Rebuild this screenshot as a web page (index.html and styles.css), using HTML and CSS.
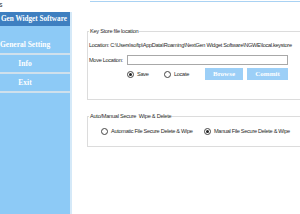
FILE: index.html
```html
<!DOCTYPE html>
<html>
<head>
<meta charset="utf-8">
<link rel="stylesheet" href="styles.css">
</head>
<body>
<div class="window">
  <div class="titlebar"><span class="title">s</span><span class="topline"></span></div>
  <div class="main">
    <nav class="sidebar">
      <div class="brand">Gen Widget Software</div>
      <div class="nav">
        <div class="nav-item">General Setting</div>
        <div class="nav-item">Info</div>
        <div class="nav-item">Exit</div>
      </div>
    </nav>
    <section class="content">
      <fieldset class="group group-key">
        <legend>Key Store file location</legend>
        <div class="row row-loc">Location: C:\Users\softp\AppData\Roaming\NextGen Widget Software\NGWE\local.keystore</div>
        <div class="row row-move">
          <span class="move-label">Move Location:</span>
          <span class="input"></span>
        </div>
        <div class="row row-actions">
          <span class="radio-opt opt-save"><span class="radio checked"></span><span class="rlabel">Save</span></span>
          <span class="radio-opt opt-locate"><span class="radio"></span><span class="rlabel">Locate</span></span>
          <span class="btn btn-browse">Browse</span>
          <span class="btn btn-commit">Commit</span>
        </div>
      </fieldset>
      <fieldset class="group group-wipe">
        <legend>Auto/Manual Secure&nbsp; Wipe &amp; Delete</legend>
        <div class="row row-wipe">
          <span class="radio-opt opt-auto"><span class="radio"></span><span class="rlabel">Automatic File Secure Delete &amp; Wipe</span></span>
          <span class="radio-opt opt-manual"><span class="radio checked"></span><span class="rlabel">Manual File Secure Delete &amp; Wipe</span></span>
        </div>
      </fieldset>
    </section>
  </div>
</div>
</body>
</html>
```

FILE: styles.css
```css
html, body {
  margin: 0;
  padding: 0;
  background: #ffffff;
}
body {
  width: 300px;
  height: 214px;
  overflow: hidden;
  font-family: "Liberation Sans", Arial, sans-serif;
  color: #222;
}
.window {
  width: 300px;
  height: 214px;
  display: flex;
  flex-direction: column;
}
.titlebar {
  height: 12px;
  display: flex;
  align-items: flex-start;
  position: relative;
}
.title {
  font-size: 7px;
  line-height: 9px;
  margin-left: -1px;
  color: #333;
}
.topline {
  position: absolute;
  left: 90px;
  right: 0;
  top: 1px;
  height: 1px;
  background: #a9d2f3;
}
.main {
  flex: 1;
  display: flex;
}
.sidebar {
  width: 70px;
  background: #8dcaf6;
  border-right: 2px solid #d5e9f8;
  display: flex;
  flex-direction: column;
}
.brand {
  height: 14px;
  background: #3e7fc0;
  color: #fff;
  font-family: "Liberation Serif", "Times New Roman", serif;
  font-weight: bold;
  font-size: 7.2px;
  line-height: 14px;
  white-space: nowrap;
  overflow: hidden;
  padding-left: 1px;
}
.nav {
  padding-top: 10px;
}
.nav-item {
  height: 17px;
  line-height: 17px;
  border-bottom: 2px solid #cfe0ec;
  color: #fff;
  font-family: "Liberation Serif", "Times New Roman", serif;
  font-weight: bold;
  font-size: 7.5px;
  text-align: center;
  padding-right: 20px;
  white-space: nowrap;
}
.content {
  flex: 1;
  padding-left: 15px;
  overflow: hidden;
}
.group {
  margin: 0 -30px 0 0;
  padding: 0 0 0 1px;
  border: 1px solid #dcdcdc;
}
.group legend {
  font-size: 5.6px;
  letter-spacing: -0.25px;
  line-height: 8px;
  padding: 0 1px;
  margin-left: 0;
  color: #2a2a2a;
  white-space: nowrap;
}
.group-key {
  margin-top: 15px;
  height: 71px;
}
.group-wipe {
  margin-top: 12px;
  height: 33px;
}
.row {
  font-size: 5.6px;
  letter-spacing: -0.3px;
  white-space: nowrap;
  color: #2a2a2a;
  display: flex;
  align-items: center;
}
.row-loc {
  height: 10px;
  margin-top: 5px;
}
.row-move {
  height: 10px;
  margin-top: 5px;
}
.move-label {
  width: 38px;
}
.input {
  width: 159px;
  height: 8px;
  border: 1px solid #a8a8a8;
  background: #fff;
}
.row-actions {
  height: 12px;
  margin-top: 3px;
}
.radio-opt {
  display: flex;
  align-items: center;
}
.radio {
  width: 5px;
  height: 5px;
  border: 1px solid #444;
  border-radius: 50%;
  background: #fff;
  position: relative;
  margin-right: 3px;
}
.radio.checked::after {
  content: "";
  position: absolute;
  left: 1px;
  top: 1px;
  width: 3px;
  height: 3px;
  border-radius: 50%;
  background: #222;
}
.opt-save {
  margin-left: 38px;
  width: 37px;
}
.opt-locate {
  width: 41px;
}
.btn {
  height: 12px;
  line-height: 12px;
  background: #9ccff7;
  color: #fff;
  font-family: "Liberation Serif", "Times New Roman", serif;
  font-weight: bold;
  font-size: 7px;
  letter-spacing: 0;
  text-align: center;
}
.btn-browse {
  width: 38px;
}
.btn-commit {
  width: 41px;
  margin-left: 4px;
}
.row-wipe {
  height: 10px;
  margin-top: 6px;
}
.opt-auto {
  margin-left: 12px;
  width: 103px;
}
```
